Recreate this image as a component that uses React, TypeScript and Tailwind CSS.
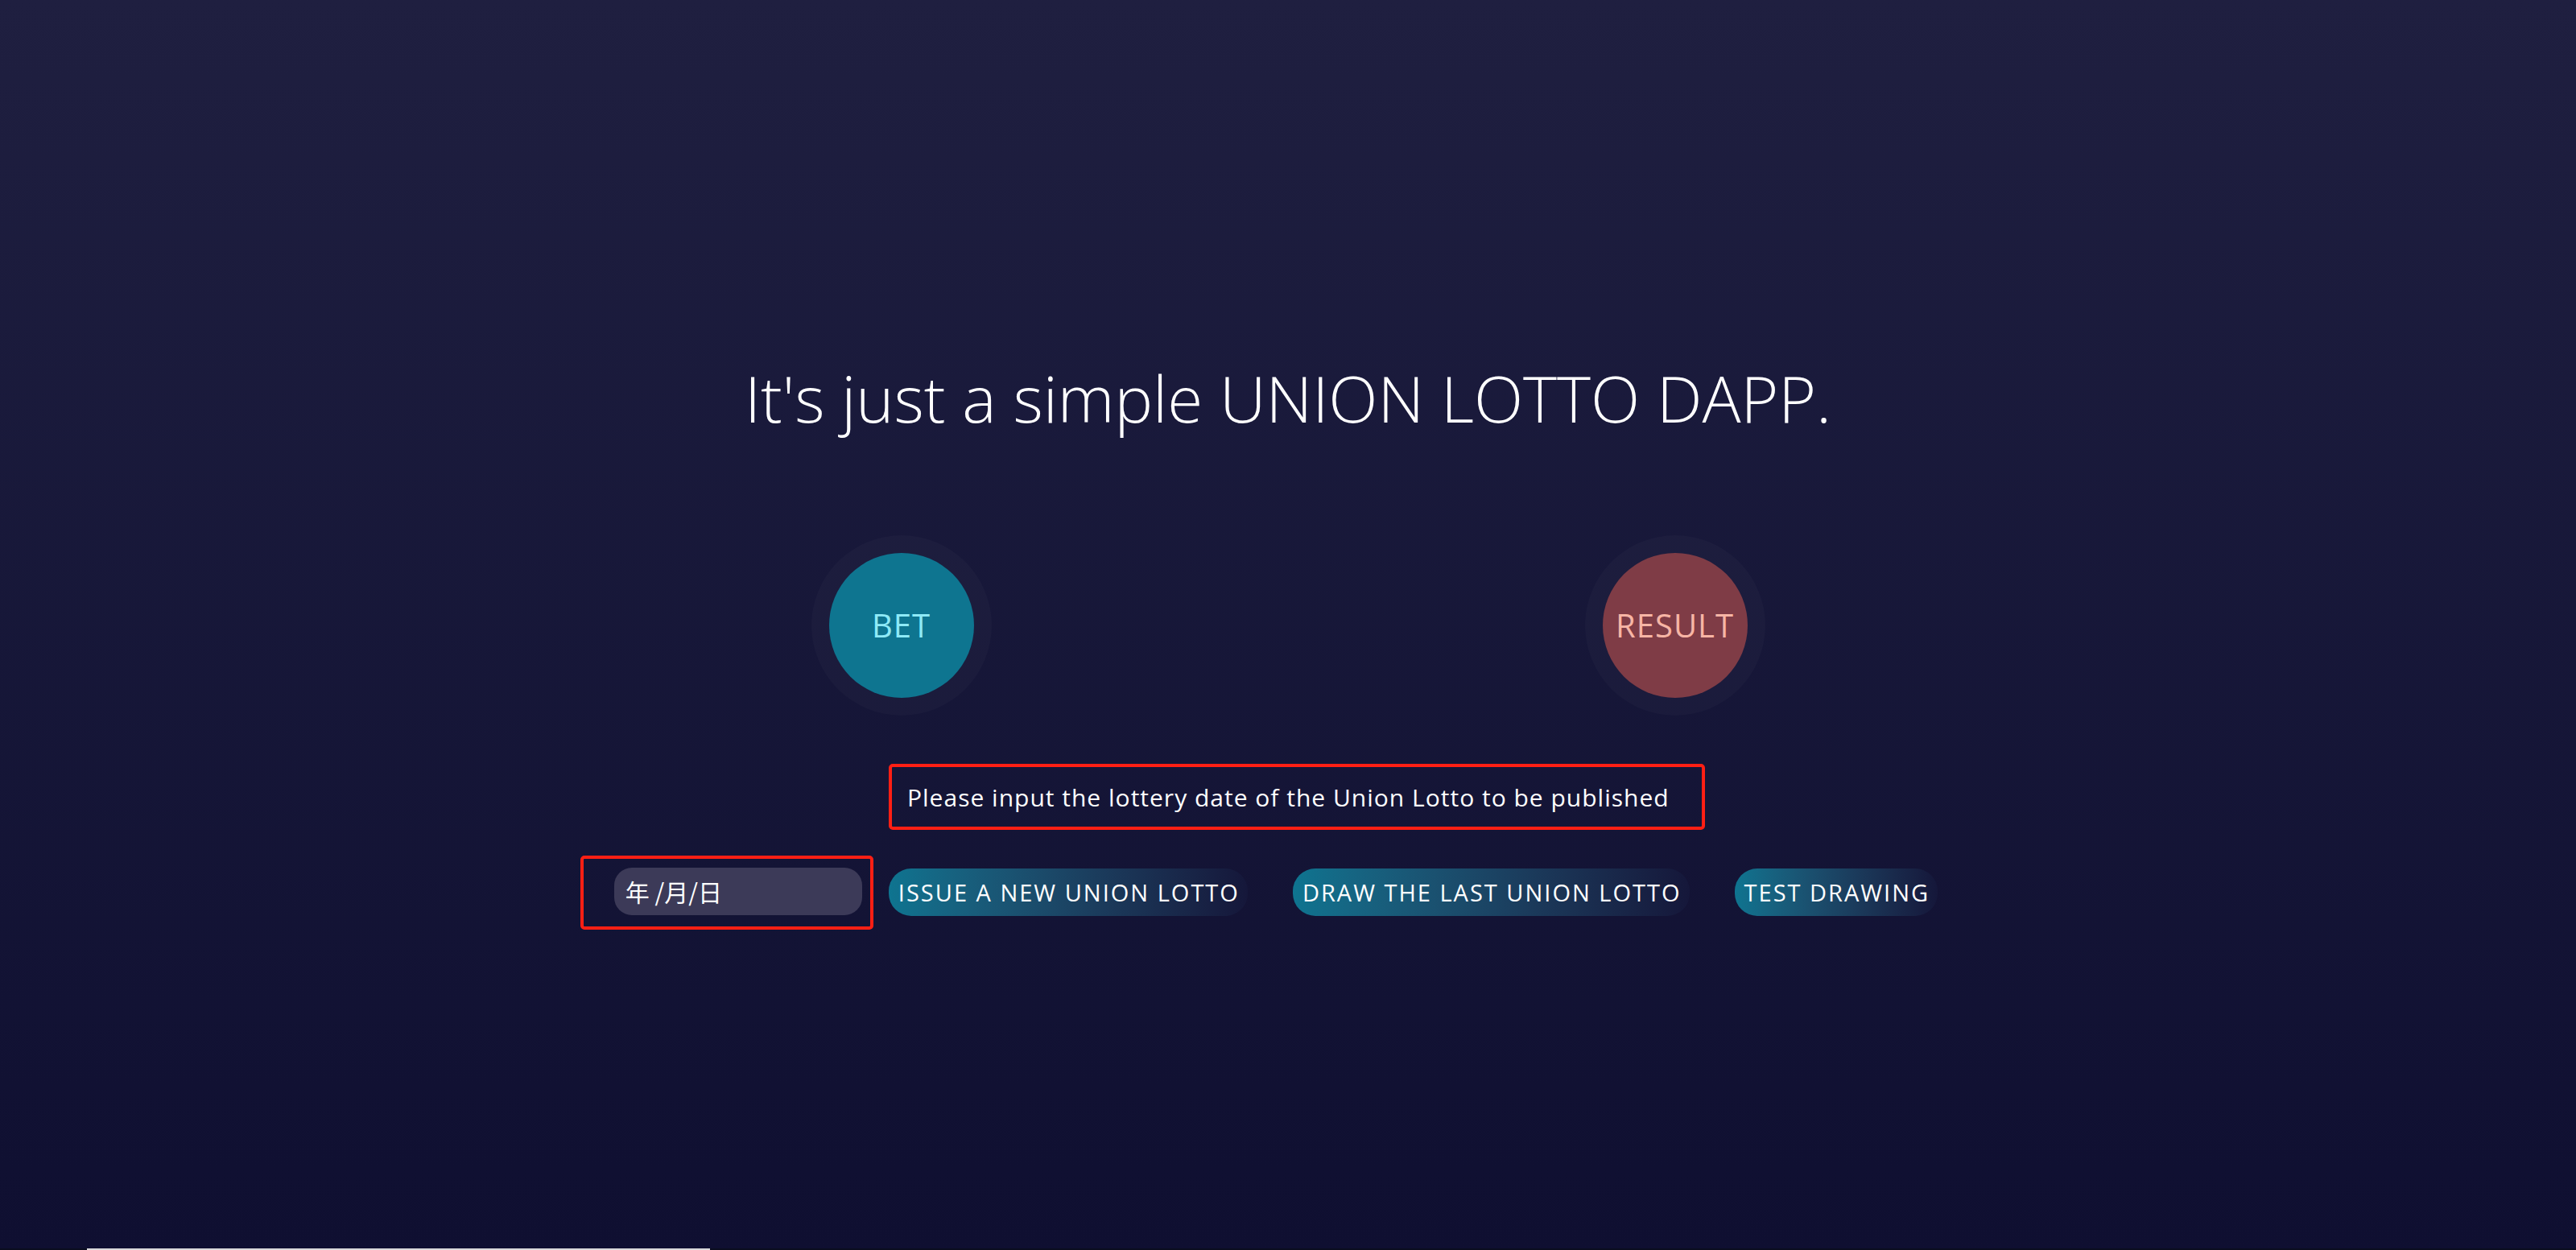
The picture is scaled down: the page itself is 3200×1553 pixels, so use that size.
import React from 'react';

const font = { fontFamily: '"Open Sans", "Liberation Sans", sans-serif' };

function RoundButton({ label, circle, text }: { label: string; circle: string; text: string }) {
    return (
        <div className="rounded-full bg-white/[0.025] p-[22px]">
            <div className={`flex h-[180px] w-[180px] items-center justify-center rounded-full ${circle}`}>
                <span className={`text-[40px] font-normal tracking-[1px] ${text}`}>{label}</span>
            </div>
        </div>
    );
}

function GradientButton({ label }: { label: string }) {
    return (
        <button className="h-[59px] rounded-[28px] bg-gradient-to-r from-[#0e7490] to-[#15173a] pl-[12px] pr-[10px] text-[29px] font-normal tracking-[2px] text-white whitespace-nowrap">
            {label}
        </button>
    );
}

export default function App() {
    return (
        <div className="flex h-[1553px] w-full flex-col overflow-hidden bg-gradient-to-b from-[#1f1f40] to-[#0f0f31]" style={font}>
            <div className="flex flex-1 flex-col items-center pt-[454px]">
                {/* Title */}
                <h1 className="text-[80px] font-light leading-none text-white">
                    It's just a simple UNION LOTTO DAPP.
                </h1>

                {/* Bet / Result */}
                <div className="mt-[131px] flex gap-[737px]">
                    <RoundButton label="BET" circle="bg-[#0e7590]" text="text-[#8eeaf7]" />
                    <RoundButton label="RESULT" circle="bg-[#7f3c46]" text="text-[#f7b5a5]" />
                </div>

                {/* Prompt */}
                <div className="ml-[22px] mt-[60px] flex h-[82px] w-[1014px] items-center rounded-[5px] border-[4px] border-[#ff1f14] pl-[19px]">
                    <p className="text-[30px] tracking-[1px] text-white">Please input the lottery date of the Union Lotto to be published</p>
                </div>

                {/* Actions */}
                <div className="mr-[72px] mt-[32px] flex items-start">
                    <div className="flex h-[92px] w-[364px] items-start rounded-[5px] border-[4px] border-[#ff1f14] pl-[38px] pt-[11px]">
                        <div
                            className="flex h-[59px] w-[308px] items-center rounded-[22px] bg-[#3c3a58] pl-[14px] text-[30px] text-white"
                            style={{ fontFamily: '"Noto Sans CJK SC", "Open Sans", sans-serif' }}
                        >
                            年 /月/日
                        </div>
                    </div>
                    <div className="ml-[19px] mt-[16px] flex gap-[56px]">
                        <GradientButton label="ISSUE A NEW UNION LOTTO" />
                        <GradientButton label="DRAW THE LAST UNION LOTTO" />
                        <GradientButton label="TEST DRAWING" />
                    </div>
                </div>
            </div>

            {/* Scrollbar */}
            <div className="h-[2px] bg-[#0a0d1f]">
                <div className="ml-[108px] h-full w-[774px] bg-[#d9d9d9]" />
            </div>
        </div>
    );
}
